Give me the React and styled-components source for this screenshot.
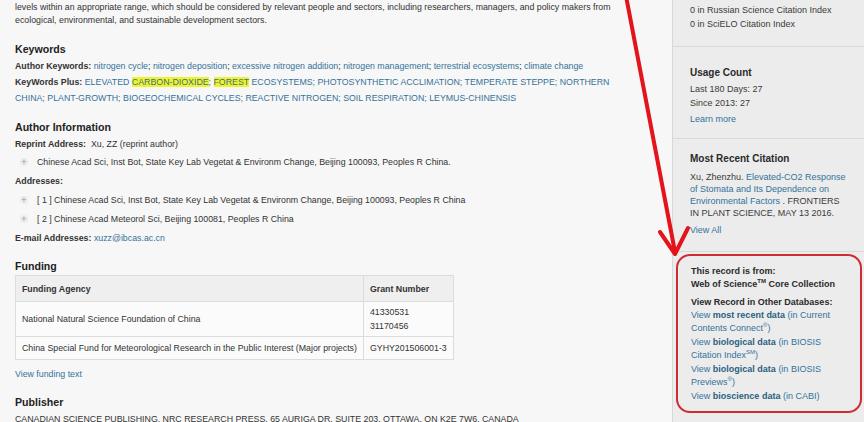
import React from "react";
import styled, { createGlobalStyle } from "styled-components";

const Global = createGlobalStyle`
    html, body {
        margin: 0;
        padding: 0;
        background: #f7f7f7;
        overflow: hidden;
    }
    body {
        font-family: "Liberation Sans", Arial, sans-serif;
        color: #333;
    }
`;

const Page = styled.div`
    position: relative;
    display: flex;
    width: 864px;
    height: 422px;
    overflow: hidden;
`;

const Main = styled.div`
    width: 657px;
    flex-shrink: 0;
    padding-left: 15px;
    font-size: 8.8px;
`;

const Para = styled.p`
    margin: 0;
    width: 625px;
    line-height: 13px;
    padding-top: 1px;
`;

const Heading = styled.h2`
    margin: ${(p) => p.top || 14}px 0 2px;
    font-size: 10.6px;
    line-height: 14px;
    font-weight: bold;
    color: #222;
`;

const Line = styled.div`
    width: 625px;
    line-height: ${(p) => p.lh || 16}px;
    margin-top: ${(p) => p.top || 0}px;
`;

const Label = styled.b`
    color: #333;
`;

const Link = styled.a`
    color: #34729a;
    text-decoration: none;
    cursor: pointer;
`;

const Mark = styled.span`
    background: #f0f22a;
`;

const Row = styled.div`
    display: flex;
    align-items: center;
    height: 19px;
    padding-left: ${(p) => (p.indent ? 5 : 0)}px;
`;

const Plus = styled.span`
    display: inline-flex;
    align-items: center;
    justify-content: center;
    width: 8px;
    height: 8px;
    margin-right: 9px;
    border-radius: 50%;
    background: #ececec;
    color: #9a9a9a;
    font-size: 9px;
    line-height: 8px;
`;

const Table = styled.table`
    margin-top: 2px;
    border-collapse: collapse;
    border: 1px solid #cfcfcf;
    background: #fbfbfb;
    font-size: 8.8px;
`;

const Th = styled.th`
    height: 25px;
    padding: 0 6px;
    text-align: left;
    background: #efefef;
    border: 1px solid #dcdcdc;
    color: #333;
    width: ${(p) => p.width || "auto"};
`;

const Td = styled.td`
    height: ${(p) => p.h || 21}px;
    padding: 0 6px;
    border: 1px solid #dcdcdc;
    line-height: 14px;
    white-space: nowrap;
`;

const Sidebar = styled.div`
    width: 191px;
    flex-shrink: 0;
    background: #ececec;
    border-left: 1px solid #d8d8d8;
    font-size: 9px;
    color: #3a3a3a;
`;

const Section = styled.div`
    padding: ${(p) => p.pad || "14px 17px 12px"};
    border-bottom: 1px solid #d9d9d9;
    line-height: 14px;
`;

const SideTitle = styled.div`
    font-size: 10px;
    font-weight: bold;
    line-height: 14px;
    margin-bottom: 2px;
    color: #2a2a2a;
`;

const Citation = styled.div`
    width: 158px;
    line-height: 12px;
    margin: 5px 0 4px;
`;

const RecordBox = styled.div`
    margin: 2px 2px 0 3px;
    padding: 9px 18px 7px 13px;
    border: 2px solid #cf2b33;
    border-radius: 14px;
    line-height: 13px;
`;

const BoxTitle = styled.div`
    font-weight: bold;
    color: #2a2a2a;
    margin-bottom: ${(p) => p.gap || 0}px;
`;

const DbLink = styled.div`
    margin-bottom: 1px;
    color: #34729a;
    b {
        color: #2b5f80;
    }
`;

const Sup = styled.sup`
    font-size: 6px;
    line-height: 0;
`;

const Arrow = styled.svg`
    position: absolute;
    left: 0;
    top: 0;
    pointer-events: none;
`;

const App = () => (
    <Page>
        <Global />
        <Main>
            <Para>
                levels within an appropriate range, which should be considered by relevant people and sectors, including
                researchers, managers, and policy makers from ecological, environmental, and sustainable development sectors.
            </Para>

            <Heading top={15}>Keywords</Heading>
            <Line>
                <Label>Author Keywords:</Label>{" "}
                <Link>nitrogen cycle</Link>; <Link>nitrogen deposition</Link>; <Link>excessive nitrogen addition</Link>;{" "}
                <Link>nitrogen management</Link>; <Link>terrestrial ecosystems</Link>; <Link>climate change</Link>
            </Line>
            <Line>
                <Label>KeyWords Plus:</Label>{" "}
                <Link>
                    ELEVATED <Mark>CARBON-DIOXIDE</Mark>; <Mark>FOREST</Mark> ECOSYSTEMS; PHOTOSYNTHETIC ACCLIMATION; TEMPERATE
                    STEPPE; NORTHERN CHINA; PLANT-GROWTH; BIOGEOCHEMICAL CYCLES; REACTIVE NITROGEN; SOIL RESPIRATION;
                    LEYMUS-CHINENSIS
                </Link>
            </Line>

            <Heading>Author Information</Heading>
            <Line>
                <Label>Reprint Address:</Label>&nbsp; Xu, ZZ (reprint author)
            </Line>
            <Row indent>
                <Plus>+</Plus>Chinese Acad Sci, Inst Bot, State Key Lab Vegetat &amp; Environm Change, Beijing 100093, Peoples R
                China.
            </Row>
            <Row>
                <Label>Addresses:</Label>
            </Row>
            <Row indent>
                <Plus>+</Plus>[ 1 ] Chinese Acad Sci, Inst Bot, State Key Lab Vegetat &amp; Environm Change, Beijing 100093,
                Peoples R China
            </Row>
            <Row indent>
                <Plus>+</Plus>[ 2 ] Chinese Acad Meteorol Sci, Beijing 100081, Peoples R China
            </Row>
            <Row>
                <Label>E-mail Addresses:</Label>&nbsp;<Link>xuzz@ibcas.ac.cn</Link>
            </Row>

            <Heading top={12}>Funding</Heading>
            <Table>
                <thead>
                    <tr>
                        <Th width="334px">Funding Agency</Th>
                        <Th>Grant Number</Th>
                    </tr>
                </thead>
                <tbody>
                    <tr>
                        <Td h={34}>National Natural Science Foundation of China</Td>
                        <Td h={34}>
                            41330531
                            <br />
                            31170456
                        </Td>
                    </tr>
                    <tr>
                        <Td h={22}>China Special Fund for Meteorological Research in the Public Interest (Major projects)</Td>
                        <Td h={22}>GYHY201506001-3</Td>
                    </tr>
                </tbody>
            </Table>
            <Line lh={14} top={7}>
                <Link>View funding text</Link>
            </Line>

            <Heading>Publisher</Heading>
            <Line>CANADIAN SCIENCE PUBLISHING, NRC RESEARCH PRESS, 65 AURIGA DR, SUITE 203, OTTAWA, ON K2E 7W6, CANADA</Line>
        </Main>

        <Sidebar>
            <Section pad="3px 17px 15px">
                <div>0 in Russian Science Citation Index</div>
                <div>0 in SciELO Citation Index</div>
            </Section>
            <Section pad="19px 17px 12px">
                <SideTitle>Usage Count</SideTitle>
                <div>Last 180 Days: 27</div>
                <div>Since 2013: 27</div>
                <div style={{ marginTop: 2 }}>
                    <Link>Learn more</Link>
                </div>
            </Section>
            <Section pad="13px 17px 14px">
                <SideTitle>Most Recent Citation</SideTitle>
                <Citation>
                    Xu, Zhenzhu. <Link>Elevated-CO2 Response of Stomata and Its Dependence on Environmental Factors</Link> .
                    FRONTIERS IN PLANT SCIENCE, MAY 13 2016.
                </Citation>
                <Link>View All</Link>
            </Section>
            <RecordBox>
                <BoxTitle>This record is from:</BoxTitle>
                <BoxTitle gap={5}>
                    Web of Science<Sup>TM</Sup> Core Collection
                </BoxTitle>
                <BoxTitle>View Record in Other Databases:</BoxTitle>
                <DbLink>
                    View <b>most recent data</b> (in Current Contents Connect<Sup>®</Sup>)
                </DbLink>
                <DbLink>
                    View <b>biological data</b> (in BIOSIS Citation Index<Sup>SM</Sup>)
                </DbLink>
                <DbLink>
                    View <b>biological data</b> (in BIOSIS Previews<Sup>®</Sup>)
                </DbLink>
                <DbLink>
                    View <b>bioscience data</b> (in CABI)
                </DbLink>
            </RecordBox>
        </Sidebar>

        <Arrow width="864" height="422" viewBox="0 0 864 422">
            <g stroke="#e3141b" strokeWidth="4" strokeLinecap="round" fill="none">
                <line x1="626" y1="-4" x2="675" y2="252" />
                <polyline points="660,232 675,254 688,228" strokeLinejoin="round" />
            </g>
        </Arrow>
    </Page>
);

export default App;
